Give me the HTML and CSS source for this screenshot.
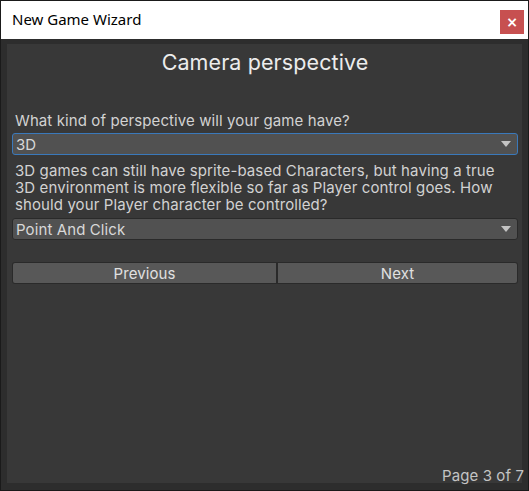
FILE: index.html
```html
<!DOCTYPE html>
<html>
<head>
<meta charset="utf-8">
<link rel="stylesheet" href="styles.css">
</head>
<body>
<div class="window">
  <div class="titlebar">
    <span class="title">New Game Wizard</span>
    <div class="close">×</div>
  </div>
  <div class="body">
    <div class="panel">
      <h1 class="heading">Camera perspective</h1>
      <div class="label">What kind of perspective will your game have?</div>
      <div class="dropdown focused"><span>3D</span><span class="arrow"></span></div>
      <div class="para">3D games can still have sprite-based Characters, but having a true 3D environment is more flexible so far as Player control goes. How should your Player character be controlled?</div>
      <div class="dropdown"><span>Point And Click</span><span class="arrow"></span></div>
      <div class="buttons">
        <div class="btn prev">Previous</div>
        <div class="btn next">Next</div>
      </div>
      <div class="spacer"></div>
      <div class="page">Page 3 of 7</div>
    </div>
  </div>
</div>
</body>
</html>
```
FILE: styles.css
```css
html, body { margin: 0; padding: 0; }
body { width: 529px; height: 491px; overflow: hidden; background: #2b2b2b; }
.window {
  box-sizing: border-box;
  width: 529px; height: 491px;
  border: 1px solid #1a1a1a;
  display: flex; flex-direction: column;
}
.titlebar {
  height: 38px; background: #ffffff;
  display: flex; align-items: center; justify-content: space-between;
  padding: 0 4px 0 11px;
  font-family: "Noto Sans", sans-serif; font-size: 15px; color: #000;
}
.title { margin-top: -2px; }
.close {
  width: 24px; height: 24px; background: #c75050; color: #fff;
  display: flex; align-items: center; justify-content: center;
  margin-top: 4px;
  font-family: "DejaVu Sans", sans-serif; font-size: 14px; font-weight: bold;
}
.body {
  flex: 1; background: #2d2d2d;
  padding: 5px 6px 7px 6px;
  display: flex;
}
.panel {
  flex: 1; background: #383838;
  display: flex; flex-direction: column;
  padding: 0 4px 0 5px;
  font-family: Inter, "Noto Sans", sans-serif; font-size: 15px; color: #d2d2d2;
  letter-spacing: 0.1px;
}
.heading {
  margin: 4px 0 0 0; text-align: center;
  font-weight: normal; font-size: 21.5px; color: #ececec; line-height: 28px;
  letter-spacing: 0.1px;
}
.label { margin-top: 35px; line-height: 19px; padding-left: 3px; }
.dropdown {
  box-sizing: border-box; height: 22px; margin-top: 3px;
  background: #515151; border: 1px solid #2a2a2a; border-radius: 3px;
  display: flex; align-items: center; justify-content: space-between;
  padding: 0 6px 0 3px; color: #d8d8d8;
}
.dropdown.focused { border-color: #3a79bb; }
.arrow {
  width: 0; height: 0;
  border-left: 5px solid transparent; border-right: 5px solid transparent;
  border-top: 6px solid #c4c4c4;
}
.para { line-height: 17px; padding: 7px 12px 0 3px; margin-bottom: 2px; }
.buttons { display: flex; margin-top: 22px; height: 22px; }
.btn {
  box-sizing: border-box; height: 22px;
  background: #585858; border: 1px solid #2a2a2a;
  display: flex; align-items: center; justify-content: center; color: #e0e0e0;
}
.prev { flex: 0 0 266px; border-radius: 3px 0 0 3px; border-right-width: 2px; }
.next { flex: 1; border-radius: 0 3px 3px 0; border-left: none; }
.spacer { flex: 1; }
.page { text-align: right; color: #c4c4c4; line-height: 20px; margin: 0 -6px -3px 0; }
```
